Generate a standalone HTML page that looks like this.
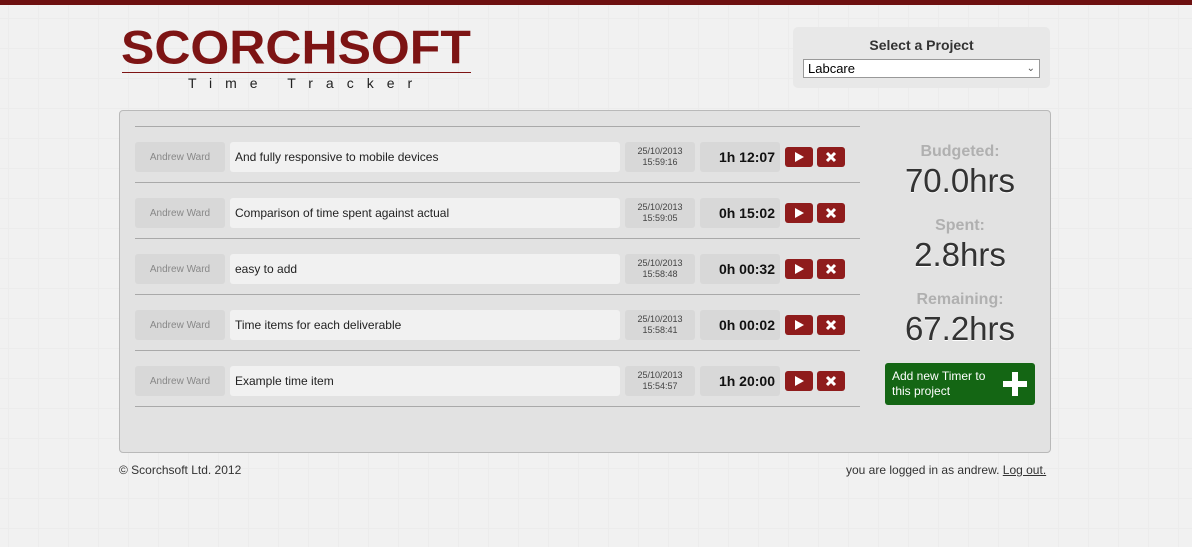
<!DOCTYPE html>
<html><head><meta charset="utf-8"><style>
*{box-sizing:border-box;margin:0;padding:0}
body{width:1192px;height:547px;background:#f1f1f1;font-family:"Liberation Sans",Arial,sans-serif;position:relative;overflow:hidden;
background-image:linear-gradient(#ececec 1px,transparent 1px),linear-gradient(90deg,#ececec 1px,transparent 1px);background-size:30px 30px;background-position:8px 18px}
.top{position:absolute;left:0;top:0;width:1192px;height:5px;background:#6d1010}
.abs{position:absolute}
.logo{left:121px;top:22px;font-size:42px;font-weight:bold;color:#7d1414;letter-spacing:0px;transform:scaleX(1.19) scaleY(1.12);transform-origin:left top;font-family:"Liberation Sans",sans-serif;line-height:46px}
.sel{left:793px;top:27px;width:257px;height:61px;background:#e8e8e8;border-radius:5px}
.panel{left:119px;top:110px;width:932px;height:343px;background:#e2e2e2;border:1px solid #b9b9b9;border-radius:4px}
.line{position:absolute;left:135px;width:725px;height:1px;background:#a9a9a9}
.b{position:absolute;height:30px;border-radius:3px}
.nm{left:135px;width:90px;background:#d8d8d8;color:#888;font-size:10px;text-align:center;line-height:32px}
.ds{left:230px;width:390px;background:#f1f1f1;color:#222;font-size:12px;line-height:30px;padding-left:5px}
.dt{left:625px;width:70px;background:#d8d8d8;color:#444;font-size:9px;text-align:center;line-height:11px;padding-top:4px}
.tm{left:700px;width:80px;background:#d8d8d8;color:#111;font-size:14px;font-weight:bold;text-align:right;padding-right:5px;line-height:30px}
.btn{position:absolute;width:28px;height:20px;background:#8f1c1c;border-radius:3px;color:#fff;text-align:center}
.lab{position:absolute;left:885px;width:150px;text-align:center;color:#b0b0b0;font-weight:bold;font-size:16px}
.val{position:absolute;left:885px;width:150px;text-align:center;color:#333;font-size:33px;text-shadow:0 1px 0 #fff}
</style></head><body>
<div class="top"></div>
<div class="abs logo">SCORCHSOFT</div>
<div class="abs" style="left:122px;top:72px;width:349px;height:1px;background:#7d1414"></div>
<div class="abs" style="left:188px;top:75px;font-size:14px;letter-spacing:13px;color:#222">Time Tracker</div>
<div class="abs sel"></div>
<div class="abs" style="left:793px;top:37px;width:257px;text-align:center;font-weight:bold;font-size:14px;color:#333">Select a Project</div>
<div class="abs" style="left:803px;top:59px;width:237px;height:19px;background:#fff;border:1px solid #999;font-size:13px;line-height:17px;padding-left:4px">Labcare<span style="position:absolute;right:4px;top:0;font-size:10px;color:#555">&#8964;</span></div>
<div class="abs panel"></div>
<div class="line" style="top:126px"></div>
<div class="line" style="top:182px"></div>
<div class="line" style="top:238px"></div>
<div class="line" style="top:294px"></div>
<div class="line" style="top:350px"></div>
<div class="line" style="top:406px"></div>

<div class="b nm" style="top:142px">Andrew Ward</div><div class="b ds" style="top:142px">And fully responsive to mobile devices</div><div class="b dt" style="top:142px">25/10/2013<br>15:59:16</div><div class="b tm" style="top:142px">1h 12:07</div>
<div class="b nm" style="top:198px">Andrew Ward</div><div class="b ds" style="top:198px">Comparison of time spent against actual</div><div class="b dt" style="top:198px">25/10/2013<br>15:59:05</div><div class="b tm" style="top:198px">0h 15:02</div>
<div class="b nm" style="top:254px">Andrew Ward</div><div class="b ds" style="top:254px">easy to add</div><div class="b dt" style="top:254px">25/10/2013<br>15:58:48</div><div class="b tm" style="top:254px">0h 00:32</div>
<div class="b nm" style="top:310px">Andrew Ward</div><div class="b ds" style="top:310px">Time items for each deliverable</div><div class="b dt" style="top:310px">25/10/2013<br>15:58:41</div><div class="b tm" style="top:310px">0h 00:02</div>
<div class="b nm" style="top:366px">Andrew Ward</div><div class="b ds" style="top:366px">Example time item</div><div class="b dt" style="top:366px">25/10/2013<br>15:54:57</div><div class="b tm" style="top:366px">1h 20:00</div>

<div class="btn" style="left:785px;top:147px"><svg width="28" height="20"><path d="M10 5L19 10L10 15Z" fill="#fff"/></svg></div><div class="btn" style="left:817px;top:147px"><svg width="28" height="20"><path d="M10 6L18 14M18 6L10 14" stroke="#fff" stroke-width="3"/></svg></div>
<div class="btn" style="left:785px;top:203px"><svg width="28" height="20"><path d="M10 5L19 10L10 15Z" fill="#fff"/></svg></div><div class="btn" style="left:817px;top:203px"><svg width="28" height="20"><path d="M10 6L18 14M18 6L10 14" stroke="#fff" stroke-width="3"/></svg></div>
<div class="btn" style="left:785px;top:259px"><svg width="28" height="20"><path d="M10 5L19 10L10 15Z" fill="#fff"/></svg></div><div class="btn" style="left:817px;top:259px"><svg width="28" height="20"><path d="M10 6L18 14M18 6L10 14" stroke="#fff" stroke-width="3"/></svg></div>
<div class="btn" style="left:785px;top:315px"><svg width="28" height="20"><path d="M10 5L19 10L10 15Z" fill="#fff"/></svg></div><div class="btn" style="left:817px;top:315px"><svg width="28" height="20"><path d="M10 6L18 14M18 6L10 14" stroke="#fff" stroke-width="3"/></svg></div>
<div class="btn" style="left:785px;top:371px"><svg width="28" height="20"><path d="M10 5L19 10L10 15Z" fill="#fff"/></svg></div><div class="btn" style="left:817px;top:371px"><svg width="28" height="20"><path d="M10 6L18 14M18 6L10 14" stroke="#fff" stroke-width="3"/></svg></div>

<div class="lab" style="top:143px">Budgeted:</div><div class="val" style="top:162px">70.0hrs</div>
<div class="lab" style="top:217px">Spent:</div><div class="val" style="top:236px">2.8hrs</div>
<div class="lab" style="top:291px">Remaining:</div><div class="val" style="top:310px">67.2hrs</div>
<div class="abs" style="left:885px;top:363px;width:150px;height:42px;background:#146614;border-radius:3px;color:#fff;font-size:12px;line-height:15px;padding:6px 0 0 7px">Add new Timer to<br>this project
<svg style="position:absolute;left:118px;top:9px" width="24" height="24"><path d="M9 0H15V9H24V15H15V24H9V15H0V9H9Z" fill="#fff"/></svg></div>

<div class="abs" style="left:119px;top:463px;font-size:12px;color:#333">© Scorchsoft Ltd. 2012</div>
<div class="abs" style="left:846px;top:463px;font-size:12px;color:#333">you are logged in as andrew. <u>Log out.</u></div>
</body></html>
